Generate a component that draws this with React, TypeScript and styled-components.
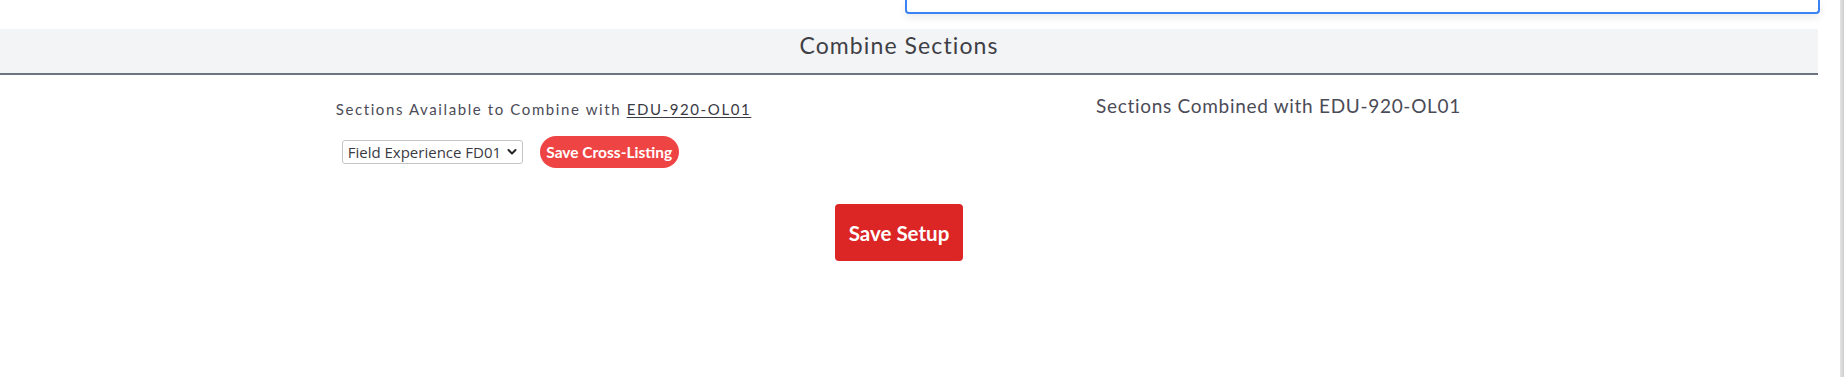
import React from "react";
import styled, { createGlobalStyle } from "styled-components";

const Global = createGlobalStyle`
  html, body { margin: 0; padding: 0; background: #ffffff; }
  body { font-family: Lato, "Noto Sans", sans-serif; overflow: hidden; }
  * { box-sizing: border-box; }
`;

const Page = styled.div`
  display: flex;
  width: 1844px;
  height: 377px;
`;

const Main = styled.div`
  width: 1818px;
  display: flex;
  flex-direction: column;
`;

const Gutter = styled.div`
  width: 26px;
  background: linear-gradient(to right, #ffffff 0, #ffffff 22px, #e4e4e4 22px, #cfcfcf 26px);
`;

const SearchBox = styled.div`
  margin-left: 905px;
  width: 915px;
  height: 14px;
  border: 2px solid #3b82f6;
  border-top: none;
  border-radius: 0 0 4px 4px;
  box-shadow: 0 4px 8px rgba(0, 0, 0, 0.08);
  overflow: hidden;
  position: relative;
  z-index: 1;
  background: #fff;
`;

const SearchText = styled.div`
  margin-top: -14px;
  padding-left: 7px;
  font-size: 14px;
  line-height: 17px;
  color: #9ca3af;
`;

const TitleBand = styled.div`
  margin-top: 15px;
  background: #f3f4f6;
  border-bottom: 2px solid #6b7280;
  height: 46px;
  display: flex;
  justify-content: center;
  padding-right: 20px;
  padding-top: 2px;
`;

const Title = styled.h2`
  margin: 0;
  font-weight: 400;
  font-size: 23px;
  line-height: 28px;
  letter-spacing: 1.1px;
  color: #3f3f46;
`;

const Columns = styled.div`
  display: grid;
  grid-template-columns: 735px 735px;
  margin-left: 176px;
  padding-top: 19px;
`;

const Column = styled.div`
  display: flex;
  justify-content: center;
`;

const Block = styled.div`
  display: flex;
  flex-direction: column;
`;

const Label = styled.div`
  font-size: 15px;
  line-height: 20px;
  letter-spacing: 1.6px;
  color: #4b4b57;
  padding-top: 5px;
`;

const Code = styled.span`
  text-decoration: underline;
  text-underline-offset: 2px;
  color: #3a3a44;
`;

const Heading = styled.div`
  font-size: 19px;
  line-height: 24px;
  letter-spacing: 0.7px;
  color: #4b4b57;
`;

const Row = styled.div`
  display: flex;
  align-items: center;
  gap: 17px;
  margin-top: 17px;
  padding-left: 6px;
`;

const SelectWrap = styled.div`
  position: relative;
  width: 181px;
  height: 24px;
`;

const Select = styled.select`
  appearance: none;
  width: 100%;
  height: 100%;
  border: 1px solid #c4c4c4;
  border-radius: 3px;
  background: #fff;
  font-family: "Open Sans", "Noto Sans", sans-serif;
  font-size: 15px;
  color: #3a3a44;
  padding: 0 0 0 5px;
  outline: none;
`;

const Chevron = styled.svg`
  position: absolute;
  right: 6px;
  top: 8px;
  pointer-events: none;
`;

const PillButton = styled.button`
  height: 32px;
  padding: 0 4px;
  width: 139px;
  border: none;
  border-radius: 16px;
  background: #ef4444;
  color: #ffffff;
  font-family: Lato, "Noto Sans", sans-serif;
  font-weight: 700;
  font-size: 15.5px;
  white-space: nowrap;
`;

const Footer = styled.div`
  display: flex;
  justify-content: center;
  padding-right: 20px;
  margin-top: 36px;
`;

const SaveButton = styled.button`
  width: 128px;
  height: 57px;
  border: none;
  border-radius: 4px;
  background: #dc2626;
  color: #ffffff;
  font-family: Lato, "Noto Sans", sans-serif;
  font-weight: 700;
  font-size: 20.5px;
`;

export default function App() {
  return (
    <>
      <Global />
      <Page>
        <Main>
          <SearchBox>
            <SearchText>Search</SearchText>
          </SearchBox>
          <TitleBand>
            <Title>Combine Sections</Title>
          </TitleBand>
          <Columns>
            <Column>
              <Block>
                <Label>
                  Sections Available to Combine with <Code>EDU-920-OL01</Code>
                </Label>
                <Row>
                  <SelectWrap>
                    <Select defaultValue="fd01">
                      <option value="fd01">Field Experience FD01</option>
                    </Select>
                    <Chevron width="10" height="8" viewBox="0 0 10 8">
                      <path d="M1.5 2 L5 5.5 L8.5 2" fill="none" stroke="#222" strokeWidth="2" strokeLinecap="round" strokeLinejoin="round" />
                    </Chevron>
                  </SelectWrap>
                  <PillButton>Save Cross-Listing</PillButton>
                </Row>
              </Block>
            </Column>
            <Column>
              <Heading>Sections Combined with EDU-920-OL01</Heading>
            </Column>
          </Columns>
          <Footer>
            <SaveButton>Save Setup</SaveButton>
          </Footer>
        </Main>
        <Gutter />
      </Page>
    </>
  );
}
